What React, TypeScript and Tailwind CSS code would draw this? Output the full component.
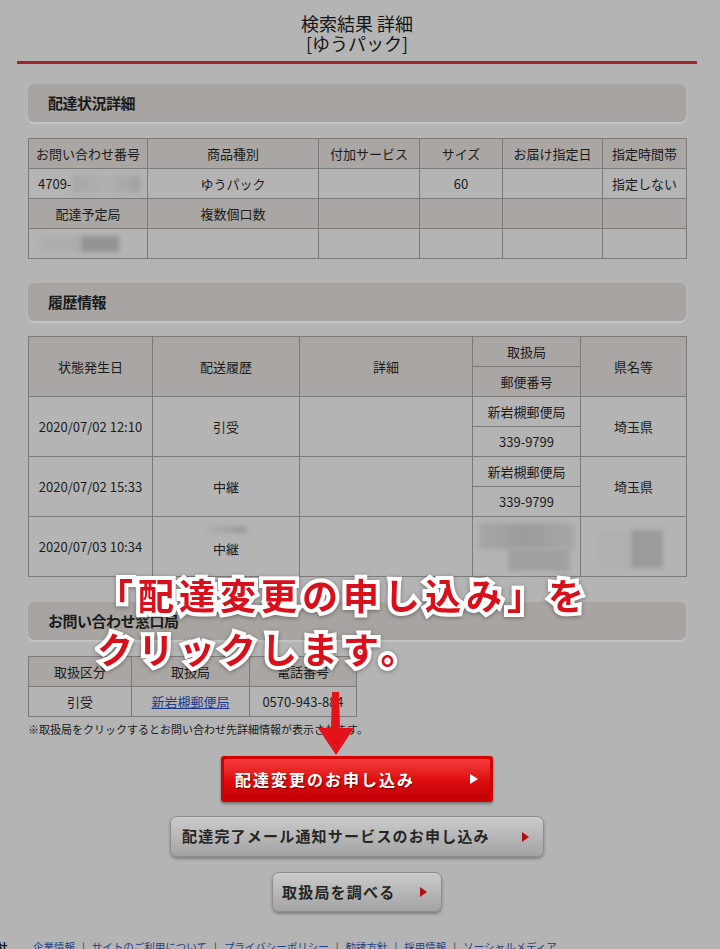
import React from 'react';

const FONT = { fontFamily: '"Noto Sans CJK JP", "Noto Sans", sans-serif' };

const th = 'border border-[#7c7b7a] bg-[#a9a6a3] text-center font-normal';
const td = 'border border-[#7c7b7a] text-center';

const SectionHead = ({ title }: { title: string }) => (
  <div className="h-[38px] rounded-[6px] bg-[#a7a4a1] shadow-[0_2px_2px_rgba(255,255,255,0.25)] flex items-center pl-[20px]">
    <span className="text-[15px] font-bold text-[#1b1b1b] tracking-[-0.5px]">{title}</span>
  </div>
);

const Blur = ({ className }: { className: string }) => (
  <div className={`blur-[2px] ${className}`} />
);

export default function App() {
  return (
    <div className="relative w-[720px] h-[949px] overflow-hidden bg-[#b4b4b4] text-[#1c1c1c]" style={FONT}>
      <div className="w-[680px] ml-[17px] pt-[13px]">
        {/* タイトル */}
        <div className="text-center text-[18px] leading-[20px] text-[#161616]">
          <div>検索結果 詳細</div>
          <div>[ゆうパック]</div>
        </div>
        <div className="mt-[8px] h-[3px] bg-[#a3252a]" />

        <div className="px-[11px]">
          {/* 配達状況詳細 */}
          <div className="mt-[20px]">
            <SectionHead title="配達状況詳細" />
          </div>
          <table className="mt-[16px] w-[658px] border-collapse text-[13px] table-fixed">
            <colgroup>
              <col className="w-[119px]" />
              <col className="w-[171px]" />
              <col className="w-[101px]" />
              <col className="w-[83px]" />
              <col className="w-[100px]" />
              <col className="w-[84px]" />
            </colgroup>
            <tbody>
              <tr className="h-[30px]">
                <td className={th}>お問い合わせ番号</td>
                <td className={th}>商品種別</td>
                <td className={th}>付加サービス</td>
                <td className={th}>サイズ</td>
                <td className={th}>お届け指定日</td>
                <td className={th}>指定時間帯</td>
              </tr>
              <tr className="h-[30px]">
                <td className={`${td} text-left pl-[9px]`}>
                  <div className="flex items-center">
                    <span>4709-</span>
                    <Blur className="ml-[2px] w-[68px] h-[18px] bg-gradient-to-r from-[#a7a7a7] via-[#b0b0b0] to-[#a3a3a3]" />
                  </div>
                </td>
                <td className={td}>ゆうパック</td>
                <td className={td}></td>
                <td className={td}>60</td>
                <td className={td}></td>
                <td className={td}>指定しない</td>
              </tr>
              <tr className="h-[30px]">
                <td className={th}>配達予定局</td>
                <td className={th}>複数個口数</td>
                <td className={th}></td>
                <td className={th}></td>
                <td className={th}></td>
                <td className={th}></td>
              </tr>
              <tr className="h-[30px]">
                <td className={`${td} pl-[12px]`}>
                  <div className="flex">
                    <Blur className="w-[40px] h-[16px] bg-[#adadad]" />
                    <Blur className="w-[38px] h-[16px] bg-[#939393]" />
                  </div>
                </td>
                <td className={td}></td>
                <td className={td}></td>
                <td className={td}></td>
                <td className={td}></td>
                <td className={td}></td>
              </tr>
            </tbody>
          </table>

          {/* 履歴情報 */}
          <div className="mt-[24px]">
            <SectionHead title="履歴情報" />
          </div>
          <table className="mt-[15px] w-[658px] border-collapse text-[13px] table-fixed">
            <colgroup>
              <col className="w-[124px]" />
              <col className="w-[147px]" />
              <col className="w-[173px]" />
              <col className="w-[108px]" />
              <col className="w-[106px]" />
            </colgroup>
            <tbody>
              <tr className="h-[30px]">
                <td rowSpan={2} className={th}>状態発生日</td>
                <td rowSpan={2} className={th}>配送履歴</td>
                <td rowSpan={2} className={th}>詳細</td>
                <td className={th}>取扱局</td>
                <td rowSpan={2} className={th}>県名等</td>
              </tr>
              <tr className="h-[30px]">
                <td className={th}>郵便番号</td>
              </tr>
              {[
                ['2020/07/02 12:10', '引受'],
                ['2020/07/02 15:33', '中継'],
              ].map(([d, s]) => (
                <React.Fragment key={d}>
                  <tr className="h-[30px]">
                    <td rowSpan={2} className={td}>{d}</td>
                    <td rowSpan={2} className={td}>{s}</td>
                    <td rowSpan={2} className={td}></td>
                    <td className={td}>新岩槻郵便局</td>
                    <td rowSpan={2} className={td}>埼玉県</td>
                  </tr>
                  <tr className="h-[30px]">
                    <td className={td}>339-9799</td>
                  </tr>
                </React.Fragment>
              ))}
              <tr className="h-[60px]">
                <td className={td}>2020/07/03 10:34</td>
                <td className={td}>
                  <div className="flex flex-col items-center">
                    <Blur className="w-[40px] h-[7px] -mt-[8px] mb-[6px] bg-gradient-to-r from-[#b0b0b0] to-[#989898]" />
                    <span>中継</span>
                  </div>
                </td>
                <td className={td}></td>
                <td className={td}>
                  <div className="flex flex-col items-center">
                    <Blur className="w-[96px] h-[26px] bg-gradient-to-r from-[#a6a6a6] via-[#9c9c9c] to-[#a8a8a8]" />
                    <Blur className="w-[62px] h-[22px] ml-[24px] bg-[#a0a0a0]" />
                  </div>
                </td>
                <td className="border border-[#7c7b7a] border-l-0">
                  <div className="flex justify-center pt-[4px] -ml-[8px]">
                    <Blur className="w-[34px] h-[38px] bg-[#b0b0b0]" />
                    <Blur className="w-[32px] h-[38px] bg-[#9b9b9b]" />
                  </div>
                </td>
              </tr>
            </tbody>
          </table>

          {/* お問い合わせ窓口局 */}
          <div className="mt-[25px]">
            <SectionHead title="お問い合わせ窓口局" />
          </div>
          <table className="mt-[16px] w-[328px] border-collapse text-[13px] table-fixed">
            <colgroup>
              <col className="w-[103px]" />
              <col className="w-[118px]" />
              <col className="w-[107px]" />
            </colgroup>
            <tbody>
              <tr className="h-[30px]">
                <td className={th}>取扱区分</td>
                <td className={th}>取扱局</td>
                <td className={th}>電話番号</td>
              </tr>
              <tr className="h-[30px]">
                <td className={td}>引受</td>
                <td className={td}>
                  <span className="text-[#1f3d8f] underline">新岩槻郵便局</span>
                </td>
                <td className={td}>0570-943-884</td>
              </tr>
            </tbody>
          </table>
          <p className="mt-[5px] text-[11px] leading-[14px] text-[#1a1a1a]">
            ※取扱局をクリックするとお問い合わせ先詳細情報が表示されます。
          </p>

          {/* ボタン */}
          <div className="flex flex-col items-center">
            <div className="mt-[20px] w-[272px] h-[46px] rounded-[3px] bg-[#d30000] p-[3px] shadow-[0_2px_3px_rgba(0,0,0,0.35)]">
              <div className="h-full rounded-[2px] bg-gradient-to-b from-[#f5393a] via-[#e00f12] to-[#c20005] flex items-center pl-[11px] pr-[12px]">
                <span className="flex-1 text-[16px] font-bold tracking-[2px] text-white [text-shadow:1px_1px_1px_rgba(80,0,0,0.7)]">
                  配達変更のお申し込み
                </span>
                <svg width="8" height="10" viewBox="0 0 8 10">
                  <polygon points="0,0 8,5 0,10" fill="#fff" />
                </svg>
              </div>
            </div>

            <div className="mt-[14px] w-[374px] h-[41px] rounded-[7px] border border-[#8e8e8e] bg-gradient-to-b from-[#cbcbcb] to-[#a3a3a3] shadow-[0_2px_3px_rgba(0,0,0,0.3)] flex items-center pl-[11px] pr-[14px]">
              <span className="flex-1 text-[15px] font-bold tracking-[1.2px] text-[#262626]">
                配達完了メール通知サービスのお申し込み
              </span>
              <svg width="7" height="10" viewBox="0 0 7 10">
                <polygon points="0,0 7,5 0,10" fill="#b30c12" />
              </svg>
            </div>

            <div className="mt-[15px] w-[170px] h-[40px] rounded-[7px] border border-[#8e8e8e] bg-gradient-to-b from-[#cbcbcb] to-[#a3a3a3] shadow-[0_2px_3px_rgba(0,0,0,0.3)] flex items-center pl-[9px] pr-[14px]">
              <span className="flex-1 text-[15px] font-bold tracking-[1.2px] text-[#262626]">取扱局を調べる</span>
              <svg width="7" height="10" viewBox="0 0 7 10">
                <polygon points="0,0 7,5 0,10" fill="#b30c12" />
              </svg>
            </div>
          </div>
        </div>
      </div>

      {/* フッター */}
      <div className="mt-[28px] flex items-center text-[10.5px] leading-[13px] whitespace-nowrap">
        <span className="-ml-[3px] w-[36px] font-bold text-[#111]">社</span>
        {['企業情報', 'サイトのご利用について', 'プライバシーポリシー', '勧誘方針', '採用情報', 'ソーシャルメディア'].map(
          (l, i) => (
            <React.Fragment key={l}>
              {i > 0 && <span className="mx-[7px] text-[#333]">|</span>}
              <span className="text-[#213f86]">{l}</span>
            </React.Fragment>
          )
        )}
      </div>

      {/* 注釈 */}
      <div className="absolute left-[97px] top-[567px] text-[36px] leading-[54px] font-bold tracking-[5px] text-[#d8101c] [-webkit-text-stroke:8px_white] [paint-order:stroke_fill] [filter:drop-shadow(0_1px_2px_rgba(0,0,0,0.35))] whitespace-nowrap">
        <div>「配達変更の申し込み」を</div>
        <div>クリックします。</div>
      </div>
      <svg className="absolute left-[317px] top-[692px]" width="38" height="64" viewBox="0 0 38 64">
        <polygon points="15,0 22,0 23,36 37,36 19,63 1,36 14,36" fill="#e3121b" />
      </svg>
    </div>
  );
}
